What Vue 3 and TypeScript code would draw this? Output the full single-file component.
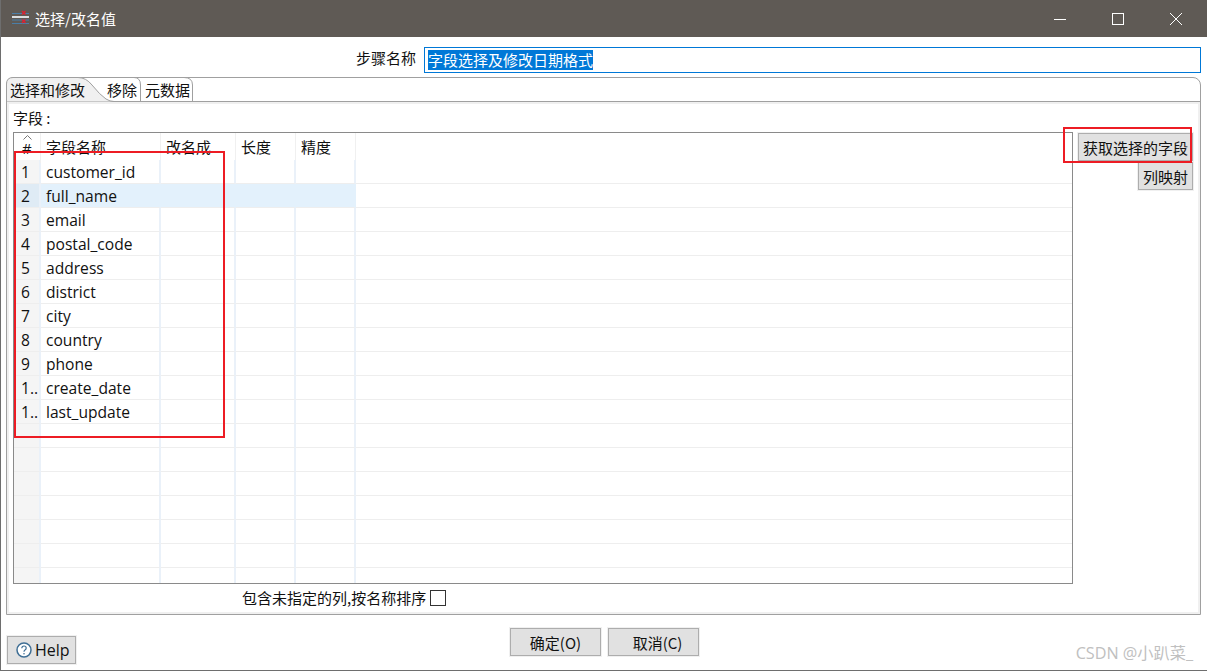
<script setup lang="ts">
const columns = ['字段名称', '改名成', '长度', '精度']
const fields = [
  'customer_id', 'full_name', 'email', 'postal_code', 'address', 'district',
  'city', 'country', 'phone', 'create_date', 'last_update',
]
const rows = Array.from({ length: 18 }, (_, i) => ({
  num: i < 9 ? String(i + 1) : i < fields.length ? '1..' : '',
  name: fields[i] ?? '',
}))
</script>

<template>
  <div class="window">
    <header class="titlebar">
      <svg class="app-icon" width="18" height="18" viewBox="0 0 18 18">
        <path d="M0 3.5H17M0 10H17M0 13.5H17" stroke="#4a7ea8" stroke-width="1.2" fill="none" />
        <path d="M0 7H17" stroke="#e8eef2" stroke-width="1.8" fill="none" />
        <path d="M10 1l3.5 3.5M13.5 1L10 4.5M10 9.5l3.5 3.5M13.5 9.5L10 13" stroke="#e02030" stroke-width="1.3" fill="none" />
      </svg>
      <span class="title">选择/改名值</span>
      <div class="controls">
        <svg width="14" height="14" viewBox="0 0 14 14"><path d="M1 7.5H13" stroke="#fff" /></svg>
        <svg width="14" height="14" viewBox="0 0 14 14"><rect x="1.5" y="1.5" width="11" height="11" fill="none" stroke="#fff" /></svg>
        <svg width="14" height="14" viewBox="0 0 14 14"><path d="M1 1L13 13M13 1L1 13" stroke="#fff" /></svg>
      </div>
    </header>

    <main class="body">
      <div class="step-row">
        <label class="step-label">步骤名称</label>
        <div class="step-input"><span class="selected">字段选择及修改日期格式</span></div>
      </div>

      <section class="folder">
        <div class="tabs">
          <svg class="tab-shape" width="190" height="25" viewBox="0 0 190 25">
            <path d="M0.5 25V7Q0.5 0.5 7 0.5H72Q80 0.5 86 8Q94 18 100 22Q104 24.5 108 24.5H1Z" fill="#f0f0f0" />
            <path d="M0.5 25V7Q0.5 0.5 7 0.5H72Q80 0.5 86 8Q94 18 100 22Q104 24.5 108 24.5" fill="none" stroke="#a0a0a0" />
            <path d="M134.5 24V8Q134.5 0.5 128 0.5" fill="none" stroke="#a0a0a0" />
            <path d="M186.5 24V8Q186.5 0.5 178 0.5" fill="none" stroke="#a0a0a0" />
          </svg>
          <span class="tab tab-active">选择和修改</span>
          <span class="tab tab-remove">移除</span>
          <span class="tab tab-meta">元数据</span>
        </div>

        <div class="panel">
          <div class="fields-label">字段 :</div>
          <div class="fields-row">
            <div class="table">
              <div class="grid header">
                <div class="cell num-head">
                  <svg class="sort" width="9" height="5" viewBox="0 0 9 5"><path d="M0.5 4.5L4.5 0.5L8.5 4.5" fill="none" stroke="#777" /></svg>
                  #
                </div>
                <div v-for="col in columns" :key="col" class="cell">{{ col }}</div>
                <div class="cell last"></div>
              </div>
              <div v-for="(row, i) in rows" :key="i" class="grid row" :class="{ 'row-selected': i === 1 }">
                <div class="cell num">{{ row.num }}</div>
                <div class="cell">{{ row.name }}</div>
                <div class="cell"></div>
                <div class="cell"></div>
                <div class="cell"></div>
                <div class="cell last"></div>
              </div>
            </div>
            <div class="side">
              <button type="button" class="btn get-btn">获取选择的字段</button>
              <button type="button" class="btn map-btn">列映射</button>
            </div>
          </div>
          <div class="check-row">
            <span>包含未指定的列,按名称排序</span>
            <span class="checkbox"></span>
          </div>
        </div>
      </section>

      <footer class="footer">
        <button type="button" class="btn help-btn">
          <svg width="18" height="18" viewBox="0 0 18 18">
            <circle cx="9" cy="9" r="7" fill="#fff" stroke="#3f6f95" stroke-width="1.5" />
            <path d="M6.8 7.2Q6.8 5 9 5Q11.2 5 11.2 7Q11.2 8.2 10 8.9Q9 9.5 9 10.8" fill="none" stroke="#3f6f95" stroke-width="1.2" />
            <circle cx="9" cy="12.8" r="0.8" fill="#3f6f95" />
          </svg>
          Help
        </button>
        <div class="actions">
          <button type="button" class="btn action-btn">确定(O)</button>
          <button type="button" class="btn action-btn cancel-btn">取消(C)</button>
        </div>
      </footer>
    </main>

    <!-- annotations drawn over the screenshot -->
    <div class="mark mark-fields"></div>
    <div class="mark mark-button"></div>
    <div class="watermark">CSDN @小趴菜_</div>
  </div>
</template>

<style>
body {
  margin: 0;
  background: #fff;
}
</style>

<style scoped>
.window {
  position: relative;
  width: 1207px;
  height: 671px;
  box-sizing: border-box;
  display: flex;
  flex-direction: column;
  background: #fff;
  border-left: 1px solid #6e6e6e;
  border-bottom: 1px solid #6e6e6e;
  overflow: hidden;
  font-family: 'Open Sans', 'Noto Sans CJK SC', sans-serif;
  font-size: 15.6px;
  color: #111;
}

.titlebar {
  height: 37px;
  flex-shrink: 0;
  display: flex;
  align-items: center;
  background: #5f5a55;
  color: #fff;
  padding-left: 11px;
}

.app-icon {
  margin-right: 5px;
}

.title {
  font-family: 'Noto Sans CJK SC', sans-serif;
  font-size: 15px;
}

.controls {
  margin-left: auto;
  display: flex;
  gap: 44px;
  padding-right: 24px;
  padding-top: 1px;
}

.body {
  flex: 1;
  display: flex;
  flex-direction: column;
  min-height: 0;
  padding: 0 6px 0 5px;
}

.step-row {
  display: flex;
  align-items: center;
  height: 26px;
  margin-top: 10px;
}

.step-label {
  margin-left: 350px;
  width: 68px;
  font-family: 'Noto Sans CJK SC', sans-serif;
  font-size: 15px;
  margin-top: -5px;
}

.step-input {
  flex: 1;
  height: 26px;
  box-sizing: border-box;
  border: 1px solid #0078d7;
  padding: 2px 0 0 3px;
  font-family: 'Noto Sans CJK SC', sans-serif;
  font-size: 15px;
  line-height: 20px;
}

.selected {
  display: inline-block;
  height: 20px;
  background: #0078d7;
  color: #fff;
}

.folder {
  height: 538px;
  margin-top: 4px;
  box-sizing: border-box;
  display: flex;
  flex-direction: column;
  border: 1px solid #a0a0a0;
  border-radius: 8px 8px 0 0;
}

.tabs {
  position: relative;
  height: 23px;
  flex-shrink: 0;
  display: flex;
  align-items: center;
  font-family: 'Noto Sans CJK SC', sans-serif;
  font-size: 15px;
}

.tab-shape {
  position: absolute;
  left: -1px;
  top: -1px;
}

.tab {
  position: relative;
}

.tab-active {
  margin-left: 3px;
}

.tab-remove {
  margin-left: 22px;
}

.tab-meta {
  margin-left: 8px;
}

.panel {
  flex: 1;
  min-height: 0;
  display: flex;
  flex-direction: column;
  border-top: 1px solid #a0a0a0;
  box-shadow: inset 0 0 0 2px #f0f0f0;
  padding: 7px 6px 0 6px;
}

.fields-label {
  height: 23px;
  font-family: 'Noto Sans CJK SC', sans-serif;
  font-size: 15px;
  line-height: 17px;
}

.fields-row {
  display: flex;
  gap: 4px;
}

.table {
  width: 1060px;
  height: 452px;
  box-sizing: border-box;
  border: 1px solid #8a8a8a;
  overflow: hidden;
  flex-shrink: 0;
}

.grid {
  display: grid;
  grid-template-columns: 27px 120px 75px 60px 60px 1fr;
}

.header {
  height: 27px;
}

.header .cell {
  font-family: 'Noto Sans CJK SC', sans-serif;
  font-size: 15px;
  line-height: 27px;
  padding-left: 5px;
  border-right: 1px solid #f0f0f0;
}

.header .cell.num-head {
  position: relative;
  font-family: 'Open Sans', sans-serif;
  padding-left: 8px;
  line-height: 30px;
}

.sort {
  position: absolute;
  left: 9px;
  top: 2px;
}

.row {
  height: 24px;
}

.row .cell {
  box-sizing: border-box;
  height: 24px;
  line-height: 25px;
  padding-left: 5px;
  border-right: 2px solid #eaf1f9;
  border-bottom: 1px solid #eeeeee;
  white-space: nowrap;
  overflow: hidden;
}

.row .cell.num {
  background: #f5f5f5;
  padding-left: 7px;
  border-right-color: #eaf1f9;
}

.row-selected .cell {
  background: #e3f1fc;
  border-right-color: #e3f1fc;
}

.row-selected .cell.num {
  background: #dfebf5;
}

.row .cell.last,
.row-selected .cell.last {
  background: transparent;
  border-right: none;
}

.header .cell.last {
  border-right: none;
}

.side {
  flex: 1;
  display: flex;
  flex-direction: column;
  align-items: flex-end;
  gap: 1px;
  padding-right: 1px;
  margin-left: 1px;
}

.btn {
  box-sizing: border-box;
  background: #e1e1e1;
  border: 1px solid #adadad;
  outline: 1px solid #f0f0f0;
  padding: 0;
  color: #111;
  font-family: 'Noto Sans CJK SC', sans-serif;
  font-size: 15px;
}

.get-btn {
  width: 115px;
  height: 28px;
  margin-top: 1px;
}

.map-btn {
  width: 55px;
  height: 28px;
}

.check-row {
  display: flex;
  align-items: center;
  justify-content: flex-start;
  gap: 4px;
  margin-left: 229px;
  margin-top: 5px;
  height: 17px;
  font-family: 'Noto Sans CJK SC', sans-serif;
  font-size: 15px;
}

.checkbox {
  width: 16px;
  height: 16px;
  box-sizing: border-box;
  border: 1px solid #333;
  background: #fff;
}

.footer {
  flex: 1;
  display: grid;
  grid-template-columns: 1fr auto 1fr;
  padding: 0 0 6px 1px;
}

.help-btn {
  justify-self: start;
  align-self: end;
  width: 69px;
  height: 28px;
  display: flex;
  align-items: center;
  gap: 2px;
  padding-left: 7px;
  font-family: 'Open Sans', sans-serif;
  font-size: 16px;
}

.actions {
  display: flex;
  gap: 7px;
  padding-top: 13px;
  margin-left: 1px;
}

.action-btn {
  width: 91px;
  height: 28px;
}

.cancel-btn {
  padding-left: 8px;
}

.mark {
  position: absolute;
  box-sizing: border-box;
  border: 2px solid #ed1c24;
}

.mark-fields {
  left: 13px;
  top: 151px;
  width: 211px;
  height: 287px;
}

.mark-button {
  left: 1062px;
  top: 127px;
  width: 129px;
  height: 36px;
}

.watermark {
  position: absolute;
  right: 14px;
  bottom: 6px;
  color: #c0c0c0;
  font-family: 'Open Sans', 'Noto Sans CJK SC', sans-serif;
  font-size: 16.2px;
}
</style>
